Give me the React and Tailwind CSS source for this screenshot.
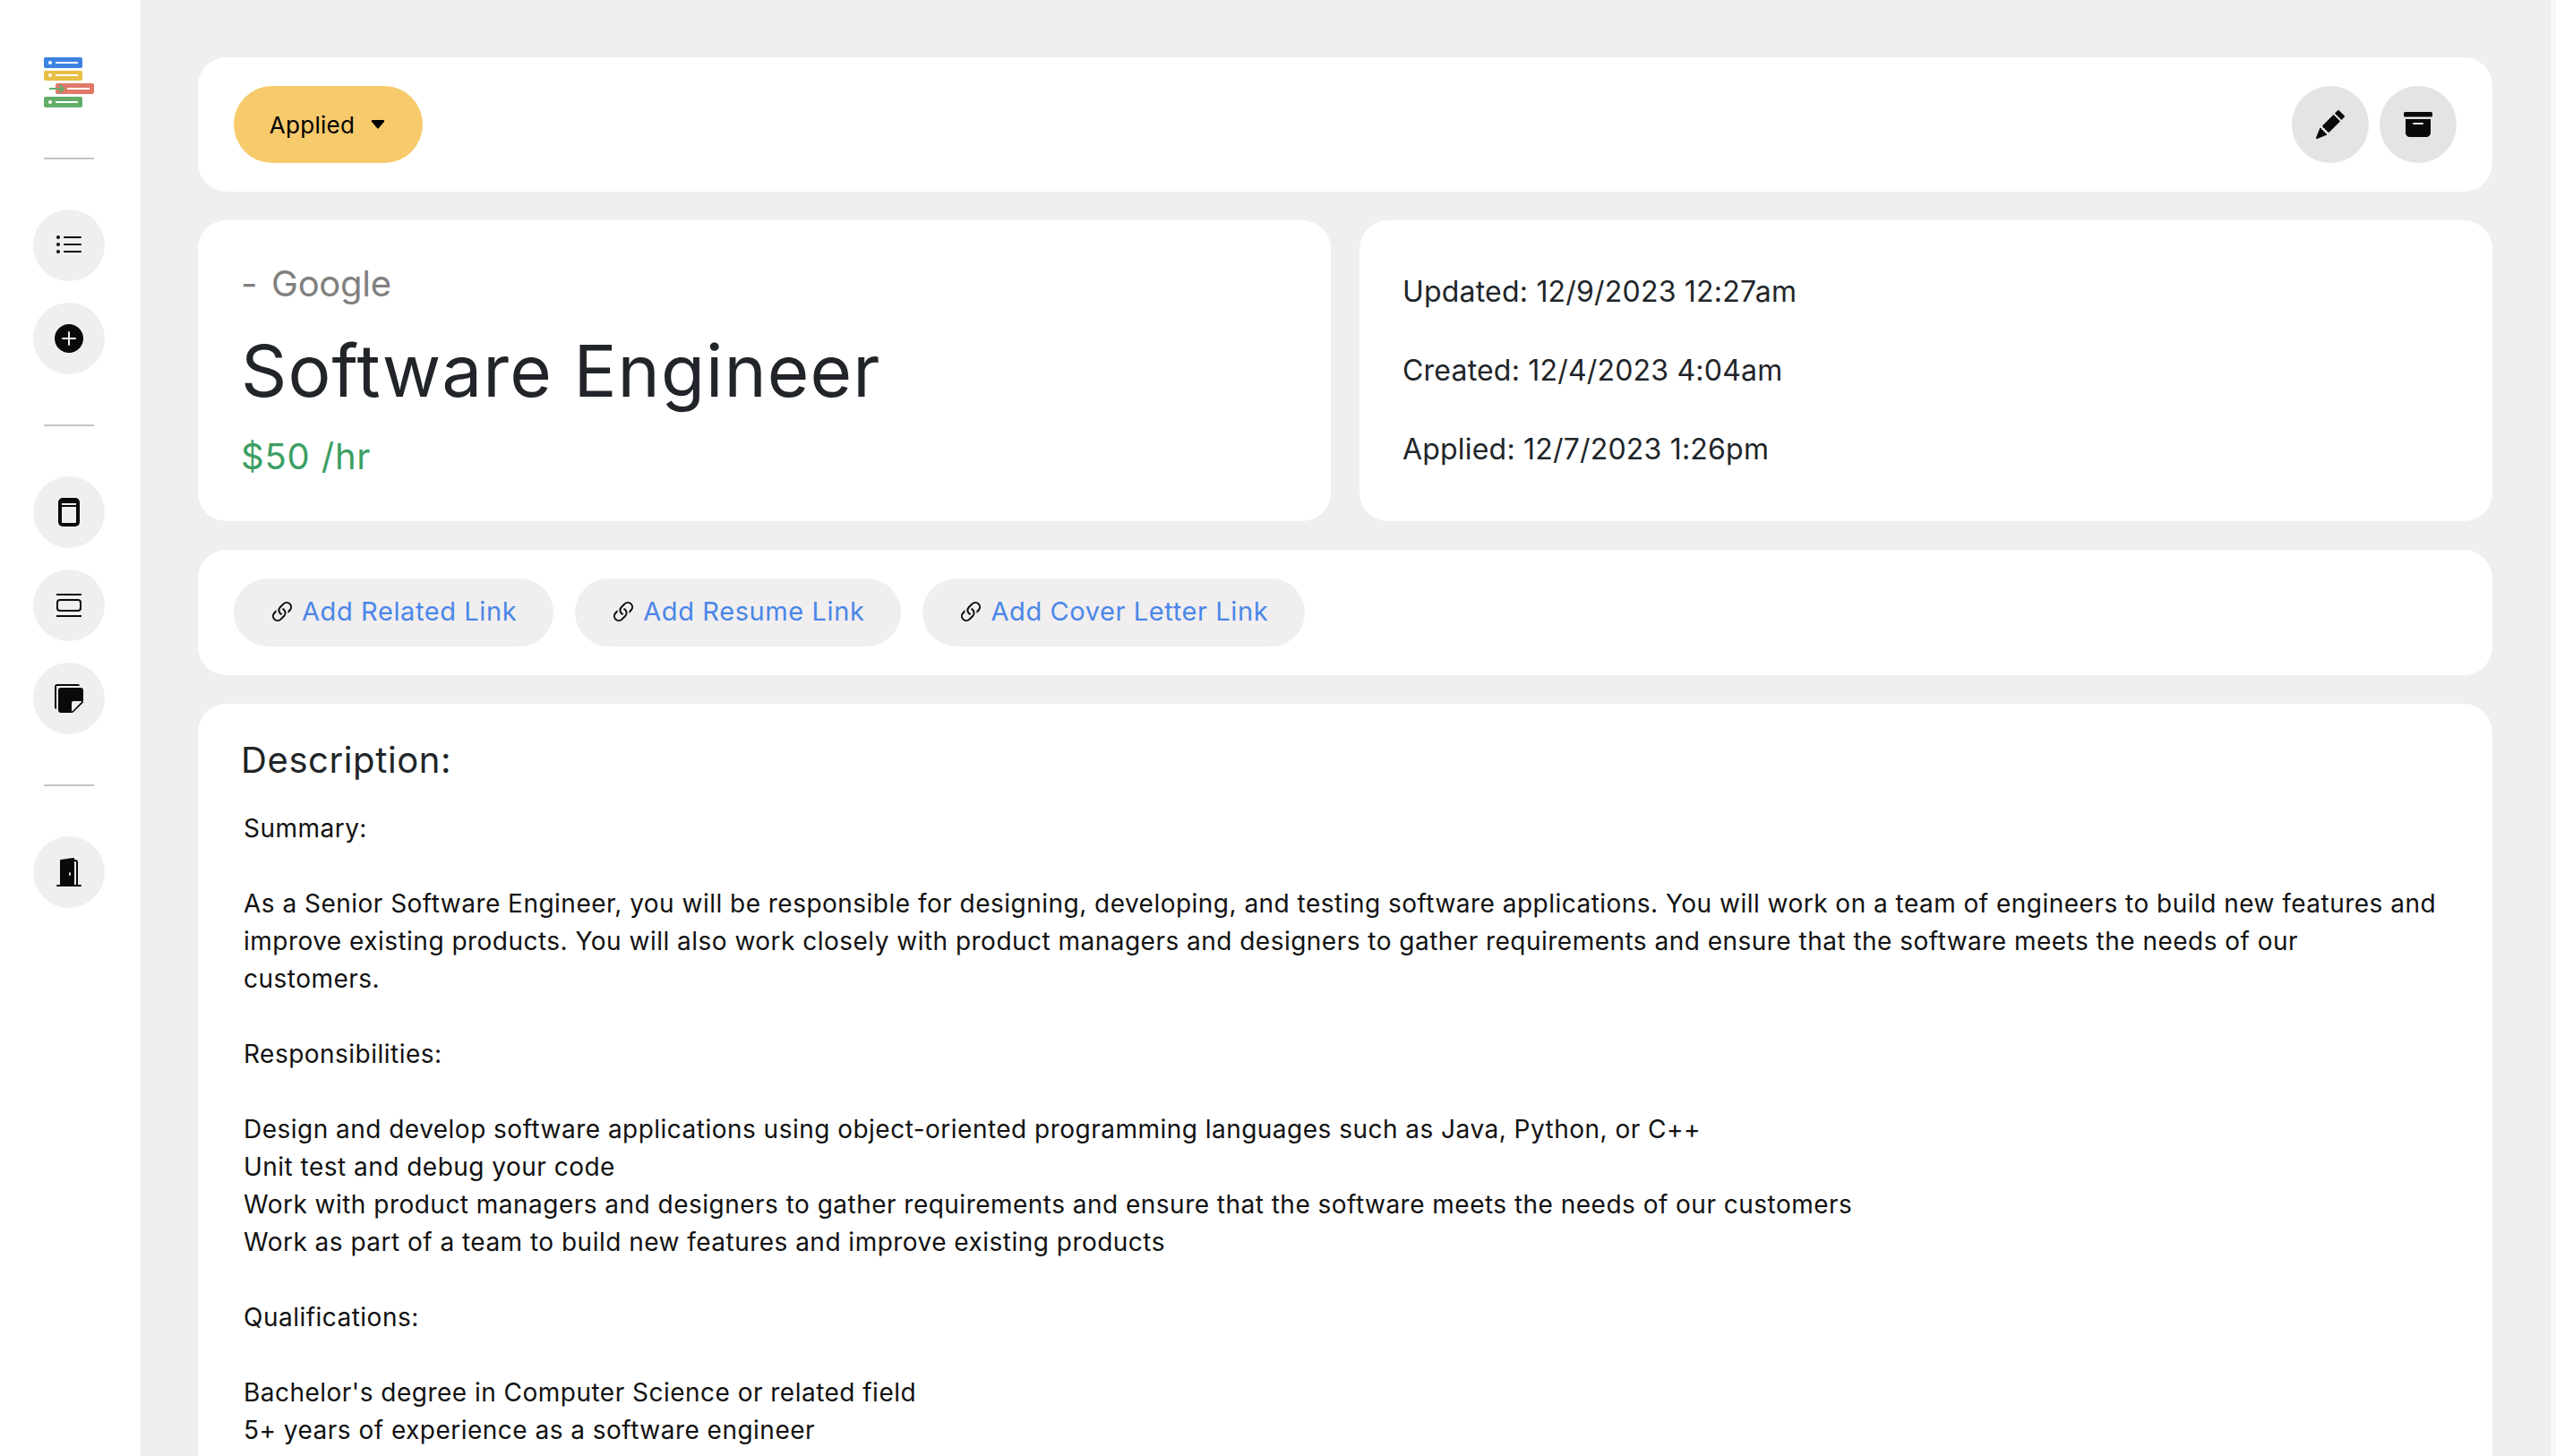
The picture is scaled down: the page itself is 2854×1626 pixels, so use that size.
import { BsListUl, BsPlusCircleFill, BsPencilFill, BsArchiveFill, BsLink45Deg, BsStickiesFill, BsDoorOpenFill, BsCaretDownFill } from 'react-icons/bs';

function Logo() {
  return (
    <svg width="56" height="56" viewBox="0 0 56 56">
      <rect x="0" y="0" width="43" height="12" rx="2" fill="#3c82e0" />
      <circle cx="7" cy="6" r="2" fill="#fff" />
      <rect x="13" y="5" width="25" height="2" fill="#fff" />
      <rect x="0" y="15" width="43" height="11" rx="2" fill="#e8bf45" />
      <circle cx="7" cy="20" r="2" fill="#fff" />
      <rect x="13" y="19" width="25" height="2" fill="#fff" />
      <rect x="13" y="29" width="43" height="12" rx="2" fill="#e0796a" />
      <rect x="26" y="34" width="25" height="2" fill="#fff" />
      <path d="M6 35h16M17 30.5l5 4.5-5 4.5" fill="none" stroke="#62ad68" strokeWidth="2" />
      <rect x="0" y="44" width="43" height="12" rx="2" fill="#62ad68" />
      <circle cx="7" cy="50" r="2" fill="#fff" />
      <rect x="13" y="49" width="25" height="2" fill="#fff" />
    </svg>
  );
}

function WindowIcon() {
  return (
    <svg width="24" height="32" viewBox="0 0 24 32">
      <rect x="2" y="2" width="20" height="28" rx="3" fill="none" stroke="#0a0a0a" strokeWidth="4" />
      <rect x="3" y="3" width="18" height="5" fill="#0a0a0a" />
      <rect x="4" y="6" width="16" height="2" fill="#f0eff0" />
      <rect x="4" y="8" width="16" height="2" fill="#0a0a0a" />
    </svg>
  );
}

function CardsIcon() {
  return (
    <svg width="28" height="26" viewBox="0 0 28 26">
      <rect x="0" y="0" width="28" height="2" fill="#0a0a0a" />
      <rect x="1" y="7" width="26" height="12" rx="3" fill="none" stroke="#0a0a0a" strokeWidth="2" />
      <rect x="0" y="24" width="28" height="2" fill="#0a0a0a" />
    </svg>
  );
}

function Circle({ children }) {
  return (
    <div className="w-20 h-20 rounded-full bg-[#f0eff0] flex items-center justify-center text-[#0a0a0a]">
      {children}
    </div>
  );
}

function Divider() {
  return <div className="w-14 h-0.5 my-14 bg-[#c4c4c4]" />;
}

function LinkButton({ label }) {
  return (
    <div className="h-[76px] pl-[38px] pr-[41px] rounded-full bg-[#f0eeef] flex items-center gap-1.5 text-[#4a86e8] text-[29px] tracking-[0.6px]">
      <BsLink45Deg className="text-[32px] text-[#0a0a0a]" />
      <span className="pb-0.5">{label}</span>
    </div>
  );
}

const lines = [
  'Summary:',
  '',
  'As a Senior Software Engineer, you will be responsible for designing, developing, and testing software applications. You will work on a team of engineers to build new features and',
  'improve existing products. You will also work closely with product managers and designers to gather requirements and ensure that the software meets the needs of our',
  'customers.',
  '',
  'Responsibilities:',
  '',
  'Design and develop software applications using object-oriented programming languages such as Java, Python, or C++',
  'Unit test and debug your code',
  'Work with product managers and designers to gather requirements and ensure that the software meets the needs of our customers',
  'Work as part of a team to build new features and improve existing products',
  '',
  'Qualifications:',
  '',
  "Bachelor's degree in Computer Science or related field",
  '5+ years of experience as a software engineer',
];

export default function App() {
  return (
    <div className="h-[1626px] w-[2854px] overflow-hidden flex bg-[#f0eeef] font-['Inter',sans-serif]">
      {/* Sidebar */}
      <div className="w-[157px] shrink-0 bg-white pr-[3px] pt-16 flex flex-col items-center">
        <Logo />
        <Divider />
        <div className="flex flex-col gap-6">
          <Circle><BsListUl className="text-[32px]" /></Circle>
          <Circle><BsPlusCircleFill className="text-[32px]" /></Circle>
        </div>
        <Divider />
        <div className="flex flex-col gap-6">
          <Circle><WindowIcon /></Circle>
          <Circle><CardsIcon /></Circle>
          <Circle><BsStickiesFill className="text-[32px]" /></Circle>
        </div>
        <Divider />
        <Circle><BsDoorOpenFill className="text-[32px]" /></Circle>
      </div>

      {/* Main */}
      <div className="flex-1 pl-16 pr-[65px] pt-16 flex flex-col gap-8 min-w-0">
        <div className="h-[150px] shrink-0 bg-white rounded-[32px] px-10 flex items-center justify-between">
          <div className="h-[86px] w-[211px] rounded-full bg-[#f7ca6b] flex items-center justify-center gap-4 text-[26px] tracking-[0.3px] text-black">
            <span>Applied</span>
            <BsCaretDownFill className="text-[20px]" />
          </div>
          <div className="flex gap-3">
            <div className="w-[86px] h-[86px] rounded-full bg-[#e5e4e3] flex items-center justify-center text-[#0a0a0a]"><BsPencilFill className="text-[32px]" /></div>
            <div className="w-[86px] h-[86px] rounded-full bg-[#e5e4e3] flex items-center justify-center text-[#0a0a0a]"><BsArchiveFill className="text-[32px]" /></div>
          </div>
        </div>

        <div className="h-[336px] shrink-0 grid grid-cols-2 gap-8">
          <div className="bg-white rounded-[32px] pl-12 pt-[41px]">
            <div className="text-[40px] leading-[60px] text-[#808080] tracking-[-0.3px] flex gap-4"><span>-</span><span>Google</span></div>
            <div className="text-[80px] leading-[96px] text-[#212529] mt-[19px] tracking-[1.07px]">Software Engineer</div>
            <div className="text-[40px] leading-[60px] text-[#3c9f63] mt-[18px] tracking-[0.8px]">$50 /hr</div>
          </div>
          <div className="bg-white rounded-[32px] pl-12 pt-14 text-[32px] leading-[48px] text-[#212529] tracking-[0.2px] flex flex-col gap-10">
            <div>Updated: 12/9/2023 12:27am</div>
            <div>Created: 12/4/2023 4:04am</div>
            <div>Applied: 12/7/2023 1:26pm</div>
          </div>
        </div>

        <div className="h-[140px] shrink-0 bg-white rounded-[32px] px-10 flex items-center gap-6">
          <LinkButton label="Add Related Link" />
          <LinkButton label="Add Resume Link" />
          <LinkButton label="Add Cover Letter Link" />
        </div>

        <div className="flex-1 bg-white rounded-t-[32px] pl-12 pr-10 pt-[33px] text-[#212529]">
          <div className="text-[40px] leading-[60px] tracking-[0.6px]">Description:</div>
          <div className="mt-[25px] pl-[3px] text-[28px] leading-[42px] text-[#111] tracking-[0.48px] whitespace-nowrap">
            {lines.map((line, i) => (
              <div key={i} className="min-h-[42px]">{line}</div>
            ))}
          </div>
        </div>
      </div>

      {/* Scrollbar */}
      <div className="w-1.5 shrink-0 bg-[#f7f7f7]" />
    </div>
  );
}
